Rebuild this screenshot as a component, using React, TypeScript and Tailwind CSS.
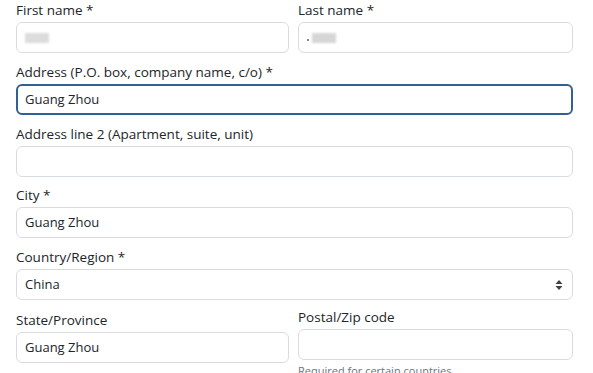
import React from 'react';

const Field: React.FC<{
    label: string;
    value?: string;
    focused?: boolean;
    children?: React.ReactNode;
    help?: string;
}> = ({ label, value = '', focused = false, children, help }) => (
    <div className="flex flex-col">
        <label className="text-[13.5px] font-medium leading-[20px] text-[#212529] mb-[2px]">{label}</label>
        {children ?? (
            <div
                className={
                    focused
                        ? 'h-[31px] rounded-[6px] border-2 border-[#2f6192] px-[7px] flex items-center text-[13px] text-[#212529] bg-white'
                        : 'h-[31px] rounded-[6px] border border-[#d9dcdf] px-[8px] flex items-center text-[13px] text-[#212529] bg-white'
                }
            >
                {value}
            </div>
        )}
        {help && <p className="text-[11px] leading-[14px] text-[#6c757d] mt-[4px]">{help}</p>}
    </div>
);

export default function App() {
    return (
        <div
            className="w-[593px] h-[373px] overflow-hidden bg-white pl-[16px] pr-[20px]"
            style={{ fontFamily: '"Open Sans", "Noto Sans", sans-serif' }}
        >
            <div className="flex flex-col gap-[9px]">
                <div className="grid grid-cols-[273px_275px] gap-x-[9px]">
                    <Field label="First name *">
                        <div className="h-[31px] rounded-[6px] border border-[#d9dcdf] px-[8px] flex items-center">
                            <span className="block w-[24px] h-[10px] bg-[#dcdcdc] blur-[1px]" />
                        </div>
                    </Field>
                    <Field label="Last name *">
                        <div className="h-[31px] rounded-[6px] border border-[#d9dcdf] px-[8px] flex items-center gap-[3px]">
                            <span className="block w-[2px] h-[2px] bg-[#888] mt-[4px]" />
                            <span className="block w-[24px] h-[10px] bg-[#d6d6d6] blur-[1px]" />
                        </div>
                    </Field>
                </div>
                <Field label="Address (P.O. box, company name, c/o) *" value="Guang Zhou" focused />
                <div className="flex flex-col gap-[8px]">
                    <Field label="Address line 2 (Apartment, suite, unit)" />
                    <Field label="City *" value="Guang Zhou" />
                </div>
                <Field label="Country/Region *">
                    <div className="h-[31px] rounded-[6px] border border-[#d9dcdf] px-[8px] flex items-center justify-between text-[13px] text-[#212529]">
                        <span>China</span>
                        <svg width="8" height="12" viewBox="0 0 8 12" className="mr-[1px]">
                            <path d="M4 1 L7.5 5 L0.5 5 Z" fill="#3d4247" />
                            <path d="M4 11 L7.5 7 L0.5 7 Z" fill="#3d4247" />
                        </svg>
                    </div>
                </Field>
                <div className="grid grid-cols-[273px_275px] gap-x-[9px] items-start">
                    <div className="mt-[1px]">
                        <Field label="State/Province" value="Guang Zhou" />
                    </div>
                    <div className="-mt-[2px]">
                        <Field label="Postal/Zip code" help="Required for certain countries" />
                    </div>
                </div>
            </div>
        </div>
    );
}
